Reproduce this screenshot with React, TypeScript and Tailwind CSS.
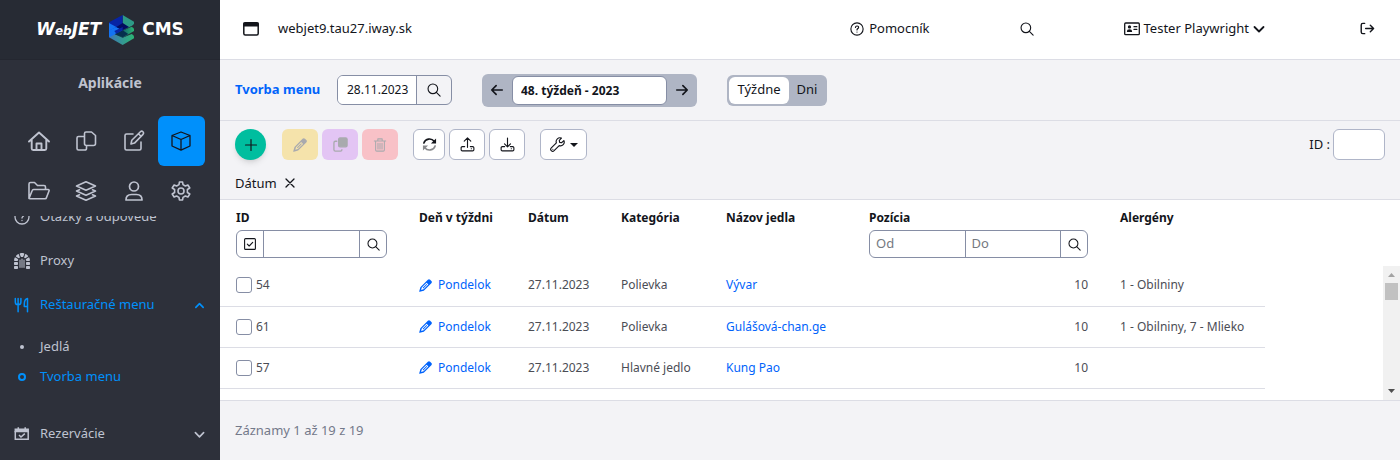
import React from "react";
import { FaDungeon } from "react-icons/fa6";

type IconProps = { className?: string };

function Svg({ className, box = 20, w = 1.5, children }: IconProps & { box?: number; w?: number; children: React.ReactNode }) {
  return (
    <svg viewBox={`0 0 ${box} ${box}`} className={className} fill="none" stroke="currentColor" strokeWidth={w} strokeLinecap="round" strokeLinejoin="round" aria-hidden="true">
      {children}
    </svg>
  );
}

const Search = ({ className }: IconProps) => (
  <Svg className={className} box={16} w={1.3}><circle cx="6.700" cy="6.700" r="5.500" /><path d="M10.700 10.700 15 15" /></Svg>
);
const Home = () => (
  <Svg className="size-6" box={24} w={1.9}><path d="M2 12.500 12 3.500l10 9M4.700 10.500V19.500a1.500 1.500 0 0 0 1.500 1.500h11.600a1.500 1.500 0 0 0 1.500-1.500V10.500M9.500 20.500v-6h5v6" /></Svg>
);
const Files = () => (
  <Svg className="size-6" box={24} w={1.6}><path d="M12 3h5.500L21.500 6.500V14.500a2 2 0 0 1-2 2H12.500a2 2 0 0 1-2-2V4.500A1.500 1.500 0 0 1 12 3zM10.500 7.500H4.500a1.500 1.500 0 0 0-1.500 1.500V19.500A1.500 1.500 0 0 0 4.500 21h6.500a1.500 1.500 0 0 0 1.500-1.500V16.500" /></Svg>
);
const Edit = () => (
  <Svg className="size-6" box={24} w={1.6}><path d="M11 5H4.500A1.500 1.500 0 0 0 3 6.500v13A1.500 1.500 0 0 0 4.500 21h13a1.500 1.500 0 0 0 1.500-1.500V13M9 15l.8-3.800 8.600-8.400a1.700 1.700 0 0 1 2.600 2.600l-8.500 8.700zM16.500 4.800l2.700 2.700" /></Svg>
);
const Box = () => (
  <Svg className="size-6" box={24} w={1.3}><path d="M12 3 21 6.500V17L12 21.200 3 17V6.500zM3 6.500l9 4 9-4M12 10.500V21" /></Svg>
);
const Folder = () => (
  <Svg className="size-6" box={24} w={1.6}><path d="M2 19.500V5A1.500 1.500 0 0 1 3.500 3.500h4l3 3h6.500A1.500 1.500 0 0 1 18.500 8v2M2.200 19l3-7.500A1.500 1.500 0 0 1 6.700 10.500H21a1 1 0 0 1 1 1.500l-2.500 6.500A1.500 1.500 0 0 1 18 19.700H2.700" /></Svg>
);
const Layers = () => (
  <Svg className="size-6" box={24} w={1.6}><path d="M12 2.800 21.500 7 12 11.200 2.500 7zM5.500 10.800 2.500 12l9.500 4.200 9.500-4.200-3-1.200M5.500 15.800 2.500 17l9.500 4.200 9.500-4.200-3-1.200" /></Svg>
);
const User = () => (
  <Svg className="size-6" box={24} w={1.7}><circle cx="12" cy="7.500" r="4.500" /><path d="M4 21c0-4 2.500-5.500 5.500-5.500h5c3 0 5.500 1.500 5.500 5.500z" /></Svg>
);
const Gear = () => (
  <Svg className="size-6" box={24} w={1.6}><circle cx="12" cy="12" r="3" /><path d="M10 5.600 10.400 3h3.200l.4 2.600 2.400 1.400 2.500-1 1.900 3-2.400 1.500v3l2.400 1.500-1.900 3-2.500-1-2.400 1.400-.4 2.600h-3.200L10 18.400 7.600 17l-2.500 1-1.900-3 2.400-1.500v-3L3.200 9l1.900-3 2.500 1z" /></Svg>
);
const Question = ({ className }: IconProps) => (
  <Svg className={className} box={16} w={1.3}><circle cx="8" cy="8" r="7" /><path d="M6.200 6.200c.2-2.400 4-2 3.600.2C9.600 7.500 8 7.600 8 9M8 11.400v.1" /></Svg>
);
const Fork = () => (
  <Svg className="size-4" box={16} w={1.500}><path d="M1.300 1.500v3.500a2.800 2.800 0 0 0 5.600 0V1.500M4.100 1.500v13.300M13.500 14.800V1.500c-2 .5-3.200 3-3.200 5.800v2.200h3.200" /></Svg>
);
const Chevron = ({ up, className = "size-[11px]" }: IconProps & { up?: boolean }) => (
  <Svg className={className} box={12} w={1.800}><path d={up ? "M2 8l4-4 4 4" : "M1.500 4 6 8.500 10.500 4"} /></Svg>
);
const CalendarCheck = () => (
  <svg viewBox="0 0 16 16" className="size-4" fill="none" stroke="currentColor" strokeWidth="1.500" aria-hidden="true">
    <path d="M1.300 3.300h12.900v2.200H1.300zM4.300 1.200v3M11.200 1.200v3" fill="currentColor" /><path d="M1.300 5v8.200h12.900V5M5 9l2 2 3.800-3.400" />
  </svg>
);
const Pencil = ({ className }: IconProps) => (
  <svg viewBox="0 0 16 16" className={className} aria-hidden="true">
    <path fill="currentColor" fillRule="evenodd" d="M10.900.9a2 2 0 0 1 2.800 0l1.500 1.500a2 2 0 0 1 0 2.800L5.900 14.400.900 15.800a.5.500 0 0 1-.6-.6L1.700 10.200zM9.300 4.600 3.400 10.500l-.8 3 3-.8 5.900-5.900zM4.500 10.900l4.800-4.800.8.800-4.800 4.800z" />
  </svg>
);
const Window = () => (
  <Svg className="size-4" box={16} w={1.500}><rect x=".8" y="1.800" width="14.400" height="12.200" rx="1.500" /><path d="M1 2.200h14v2.600H1z" fill="currentColor" /></Svg>
);
const IdCard = () => (
  <Svg className="size-4" box={16} w={1.300}><rect x=".7" y="2" width="14.600" height="11.700" rx="1" /><circle cx="5.500" cy="5.900" r="1" fill="currentColor" /><path d="M3.500 10.400c0-2 4-2 4 0z" fill="currentColor" /><path d="M10 5.700h2.800M10 8.400h2.800" /></Svg>
);
const Logout = () => (
  <Svg className="size-[15px]" box={16} w={1.500}><path d="M5 2.500H3A1.700 1.700 0 0 0 1.300 4.200v7.600A1.700 1.700 0 0 0 3 13.500h2M6 8h8.500M11 4.500 14.500 8 11 11.500" /></Svg>
);
const Arrow = ({ right }: { right?: boolean }) => (
  <Svg className="size-[14px]" box={16} w={1.900}><path d={right ? "M2 8h12M9 3l5 5-5 5" : "M14 8H2M7 3 2 8l5 5"} /></Svg>
);
const Refresh = () => (
  <svg viewBox="0 0 16 16" className="size-[15px]" fill="none" stroke="currentColor" strokeWidth="1.700" strokeLinecap="round" aria-hidden="true">
    <path d="M2 6.500C3.500 1.500 10 .800 13 4.500" /><path d="M15 1.500v5.500h-5.500z" fill="currentColor" stroke="none" />
    <g opacity=".5"><path d="M14 9.500C12.500 14.500 6 15.200 3 11.500" /><path d="M1 14.500v-5.500h5.500z" fill="currentColor" stroke="none" /></g>
  </svg>
);
const Transfer = ({ down }: { down?: boolean }) => (
  <Svg className="size-[15px]" box={16} w={1.200}><path d={down ? "M8 1v9.500M4.800 7.300 8 10.500l3.200-3.200" : "M8 11V1M4.500 4.500 8 1l3.500 3.500"} /><path d="M5 10.200H2.500a1.300 1.300 0 0 0-1.300 1.300v2a1.300 1.300 0 0 0 1.300 1.300h11a1.300 1.300 0 0 0 1.300-1.300v-2a1.300 1.300 0 0 0-1.300-1.300H11M12 12.500h.2" /></Svg>
);
const Wrench = () => (
  <Svg className="size-[15px]" box={16} w={1.200}><path d="M12.200 1.200a4 4 0 0 0-5.400 5L1.400 11.600a2.100 2.100 0 0 0 3 3l5.400-5.400a4 4 0 0 0 5-5.400l-2.500 2.300-2-.4-.4-2zM3 13h.1" /></Svg>
);

function LogoMark() {
  return (
    <svg viewBox="0 0 75 90" className="h-[30px] w-[25px]" aria-hidden="true">
      <defs>
        <linearGradient id="base"><stop offset="0" stopColor="#3f74b8" /><stop offset="1" stopColor="#2bb673" /></linearGradient>
        <linearGradient id="lobe"><stop offset="0.400" stopColor="#12676b" /><stop offset="1" stopColor="#2bb673" /></linearGradient>
      </defs>
      <path d="M0 50 41 68 68 57q7 3 7 8v5L41 90 0 67z" fill="url(#base)" />
      <path d="M20 56 68 35q7 3 7 8v5L41 68z" fill="url(#lobe)" />
      <path d="M41 0 75 20v5q0 4-6 7L41 46z" fill="#2d9a86" />
      <path d="M0 24 41 46 16 59 0 67z" fill="#1473f2" />
      <path d="M0 22 41 0v45L22 36 0 46z" fill="#0724a4" />
      <path d="M0 24 22 36 0 47z" fill="#1473f2" />
      <path d="M22 36 41 24 60 36 41 46z" fill="#030b5e" />
      <path d="M18 57 41 46 58 57 41 67z" fill="#06304e" />
      <path d="M16 48 41 36 41 46 22 56z" fill="#0724a4" />
    </svg>
  );
}

const tiles = [
  { label: "Domov", icon: <Home /> },
  { label: "Stránky", icon: <Files /> },
  { label: "Formuláre", icon: <Edit /> },
  { label: "Aplikácie", icon: <Box />, active: true },
  { label: "Súbory", icon: <Folder /> },
  { label: "Šablóny", icon: <Layers /> },
  { label: "Používatelia", icon: <User /> },
  { label: "Nastavenia", icon: <Gear /> },
];

const rows = [
  { id: 54, category: "Polievka", name: "Vývar", allergens: "1 - Obilniny" },
  { id: 61, category: "Polievka", name: "Gulášová-chan.ge", allergens: "1 - Obilniny, 7 - Mlieko" },
  { id: 57, category: "Hlavné jedlo", name: "Kung Pao", allergens: "" },
];

function Sidebar() {
  return (
    <aside className="flex w-[220px] shrink-0 flex-col bg-[#2d303a] text-[#bfc3d0]">
      <a href="#" aria-label="WebJET CMS" className="flex h-[60px] items-center justify-center gap-2 border-b border-[#242730] bg-[#272b34] font-['DejaVu_Sans',sans-serif] text-[17px] font-bold text-white">
        <span className="italic">W<span className="text-xs">eb</span>JET</span>
        <LogoMark />
        <span>CMS</span>
      </a>
      <h2 className="flex h-[46px] items-center justify-center text-sm font-bold">Aplikácie</h2>
      <nav aria-label="Moduly" className="grid grid-cols-4 px-[15px] pt-[10px]">
        {tiles.map((t) => (
          <a key={t.label} href="#" aria-label={t.label} className={t.active ? "flex h-[50px] items-center justify-center rounded-md bg-[#0090fb] text-[#13151b]" : "flex h-[50px] items-center justify-center"}>
            {t.icon}
          </a>
        ))}
      </nav>
      <nav aria-label="Aplikácie" className="flex flex-col overflow-hidden text-[13px]">
        <a href="#" className="-mt-[21px] flex h-11 items-center gap-[10px] px-[14px] [clip-path:inset(20px_0_0_0)]"><Question className="size-4" />Otázky a odpovede</a>
        <a href="#" className="flex h-11 items-center gap-[10px] px-[14px]"><FaDungeon className="size-4" />Proxy</a>
        <a href="#" className="flex h-11 items-center gap-[10px] pr-[15px] pl-[14px] text-[#0090fb]"><Fork /><span className="flex-1">Reštauračné menu</span><Chevron up /></a>
        <a href="#" className="mt-[5px] flex h-[30px] items-center gap-[10px] px-[14px]"><span className="flex w-4 justify-center"><span className="size-1 rounded-full bg-current" /></span>Jedlá</a>
        <a href="#" className="flex h-[30px] items-center gap-[10px] px-[14px] text-[#0090fb]"><span className="flex w-4 justify-center"><span className="size-2 rounded-full border-2 border-current" /></span>Tvorba menu</a>
        <a href="#" className="mt-5 flex h-11 items-center gap-[10px] pr-[15px] pl-[14px]"><CalendarCheck /><span className="flex-1">Rezervácie</span><Chevron /></a>
      </nav>
    </aside>
  );
}

function TopBar() {
  return (
    <header className="flex h-[60px] items-center border-b border-[#dcdde5] bg-white pr-[25px] pb-[2px] pl-[23px] text-[13px]">
      <a href="#" className="flex items-center gap-[19px]"><Window />webjet9.tau27.iway.sk</a>
      <a href="#" className="ml-auto flex items-center gap-[5px]"><Question className="size-[14px]" />Pomocník</a>
      <button aria-label="Hľadať" className="ml-[90px]"><Search className="size-[14px]" /></button>
      <button className="ml-[90px] flex items-center gap-1"><IdCard />Tester Playwright<Chevron className="size-3" /></button>
      <button aria-label="Odhlásiť" className="ml-[95px]"><Logout /></button>
    </header>
  );
}

function FilterBar() {
  return (
    <div className="flex h-[61px] items-center border-b border-[#dcdde5] px-[15px] text-[13px]">
      <h1 className="w-[102px] font-bold text-[#0063fb]">Tvorba menu</h1>
      <div className="flex h-[30px] w-[115px] overflow-hidden rounded-md border border-[#868ea5]">
        <input aria-label="Dátum" defaultValue="28.11.2023" className="w-[79px] border-r border-[#868ea5] bg-white pl-[9px] text-xs" />
        <button aria-label="Hľadať dátum" className="flex flex-1 items-center justify-center"><Search className="size-[14px]" /></button>
      </div>
      <div className="ml-[30px] flex h-[33px] items-center rounded-md bg-[#afb5c4]">
        <button aria-label="Predchádzajúci týždeň" className="flex w-[30px] justify-center"><Arrow /></button>
        <input aria-label="Týždeň" defaultValue="48. týždeň - 2023" className="h-[29px] w-[155px] rounded-md border border-[#868ea5] bg-white px-2 text-xs font-bold" />
        <button aria-label="Nasledujúci týždeň" className="flex w-[30px] justify-center"><Arrow right /></button>
      </div>
      <div className="ml-[30px] flex h-[31px] items-center rounded-md bg-[#afb5c4] p-[2px]">
        <button className="h-[27px] w-[60px] rounded-md bg-white">Týždne</button>
        <button className="w-9 text-center">Dni</button>
      </div>
    </div>
  );
}

function Toolbar() {
  const plain = "flex h-[31px] w-9 items-center justify-center rounded-md";
  const outlined = "flex h-[31px] items-center justify-center rounded-md border border-[#afb5c8] bg-white";
  return (
    <div className="flex h-[79px] flex-col border-b border-[#dcdde5] px-[15px] pt-2 text-[13px]">
      <div className="flex items-center">
        <button aria-label="Pridať" className="flex size-[31px] items-center justify-center rounded-full bg-[#00be9f] shadow-md"><Svg className="size-[14px]" box={14} w={1.200}><path d="M7 1.500v11M1.500 7h11" /></Svg></button>
        <div className="ml-4 flex gap-1 text-[#a9aaae]">
          <button disabled aria-label="Upraviť" className={`${plain} bg-[#f5e3ab]`}><Pencil className="size-[14px]" /></button>
          <button disabled aria-label="Duplikovať" className={`${plain} bg-[#e3c5f4]`}><Svg className="size-[15px]" box={16} w={1.400}><rect x="6" y="1" width="9" height="9.500" rx="1.500" fill="currentColor" /><path d="M4 4.500H2.500A1.500 1.500 0 0 0 1 6v7.500A1.500 1.500 0 0 0 2.500 15H8A1.500 1.500 0 0 0 9.500 13.500" /></Svg></button>
          <button disabled aria-label="Vymazať" className={`${plain} bg-[#f8c1c7]`}><Svg className="size-[14px]" box={16} w={1.200}><path d="M1.500 3.500h13M5.500 3.500v-2.500h5v2.500M3 3.500v10.200A1.300 1.300 0 0 0 4.300 15h7.400a1.300 1.300 0 0 0 1.300-1.300v-10.200M5.700 6v6.500M8 6v6.500M10.300 6v6.500" /></Svg></button>
        </div>
        <div className="ml-[15px] flex gap-1">
          <button aria-label="Obnoviť" className={`${outlined} w-8`}><Refresh /></button>
          <button aria-label="Exportovať" className={`${outlined} w-9`}><Transfer /></button>
          <button aria-label="Importovať" className={`${outlined} w-9`}><Transfer down /></button>
        </div>
        <button aria-label="Nastavenia tabuľky" className={`${outlined} ml-[15px] w-[47px] gap-[5px]`}><Wrench /><svg viewBox="0 0 8 4" className="h-1 w-2" aria-hidden="true"><path d="M0 0h8L4 4z" fill="currentColor" /></svg></button>
        <label className="ml-auto flex items-center gap-[3px]">ID :<input className="h-[31px] w-[52px] rounded-md border border-[#afb5c8] bg-white px-2" /></label>
      </div>
      <button className="mt-[13px] flex items-center gap-2 self-start leading-5">Dátum<Svg className="size-[10px]" box={10} w={1.300}><path d="m1 1 8 8M9 1l-8 8" /></Svg></button>
    </div>
  );
}

function MenuTable() {
  const group = "flex h-7 overflow-hidden rounded-md border border-[#868ea5] font-normal";
  return (
    <div className="flex min-h-[200px] flex-1 items-stretch justify-between overflow-hidden bg-white">
      <table className="w-[1045px] table-fixed self-start text-left text-xs text-[#4b4d55]">
        <colgroup>
          <col className="w-[183px]" /><col className="w-[109px]" /><col className="w-[93px]" /><col className="w-[105px]" /><col className="w-[143px]" /><col className="w-[251px]" /><col className="w-[161px]" />
        </colgroup>
        <thead className="align-top text-[#13151b]">
          <tr className="h-[65px]">
            <th className="px-4 pt-2">
              <div className="mb-[2px] leading-5">ID</div>
              <div className={group}>
                <label className="flex w-[27px] items-center justify-center border-r border-[#868ea5]">
                  <input type="checkbox" aria-label="Vybrať všetko" defaultChecked className="peer sr-only" />
                  <Svg className="size-3" box={12} w={1.100}><rect x=".6" y=".6" width="10.800" height="10.800" rx="1" /><path d="m3.300 6.200 1.900 1.800 3.500-3.600" /></Svg>
                </label>
                <input aria-label="Filter ID" className="w-0 flex-1 px-2" />
                <button aria-label="Filtrovať ID" className="flex w-[27px] items-center justify-center border-l border-[#868ea5]"><Search className="size-[13px]" /></button>
              </div>
            </th>
            <th className="px-4 pt-2 leading-5">Deň v týždni</th>
            <th className="px-4 pt-2 leading-5">Dátum</th>
            <th className="px-4 pt-2 leading-5">Kategória</th>
            <th className="px-4 pt-2 leading-5">Názov jedla</th>
            <th className="px-4 pt-2">
              <div className="mb-[2px] leading-5">Pozícia</div>
              <div className={`${group} text-[13px]`}>
                <input aria-label="Pozícia od" placeholder="Od" className="w-0 flex-1 px-[6px] placeholder:text-[#75797f]" />
                <input aria-label="Pozícia do" placeholder="Do" className="w-0 flex-1 border-l border-[#868ea5] px-[6px] placeholder:text-[#75797f]" />
                <button aria-label="Filtrovať pozíciu" className="flex w-[27px] items-center justify-center border-l border-[#868ea5]"><Search className="size-[13px]" /></button>
              </div>
            </th>
            <th className="px-4 pt-2 leading-5">Alergény</th>
          </tr>
        </thead>
        <tbody>
          {rows.map((r) => (
            <tr key={r.id} className="h-[41px] border-b border-[#dcdde5] whitespace-nowrap">
              <td className="px-4">
                <label className="flex items-center gap-1"><input type="checkbox" className="size-4 appearance-none rounded-[3px] border border-[#868ea5] bg-white" />{r.id}</label>
              </td>
              <td className="px-4"><a href="#" className="flex items-center gap-[6px] text-[#0063fb]"><Pencil className="size-[13px]" />Pondelok</a></td>
              <td className="px-4">27.11.2023</td>
              <td className="px-4">{r.category}</td>
              <td className="px-4"><a href="#" className="text-[#0063fb]">{r.name}</a></td>
              <td className="px-4 text-right">10</td>
              <td className="px-4">{r.allergens}</td>
            </tr>
          ))}
        </tbody>
      </table>
      <div className="mt-[66px] flex w-[17px] flex-col items-center bg-[#f1f1f1]" aria-hidden="true">
        <svg viewBox="0 0 17 17" className="size-[17px]"><path d="M5 11h7L8.500 7z" fill="#a3a3a3" /></svg>
        <div className="h-[17px] w-[13px] bg-[#c1c1c1]" />
        <svg viewBox="0 0 17 17" className="mt-auto size-[17px]"><path d="M5 6h7l-3.500 4z" fill="#505050" /></svg>
      </div>
    </div>
  );
}

export default function App() {
  return (
    <div className="flex min-h-screen bg-[#f3f3f6] font-['Noto_Sans',sans-serif] text-[#13151b]">
      <Sidebar />
      <main className="flex min-w-0 flex-1 flex-col">
        <TopBar />
        <FilterBar />
        <Toolbar />
        <MenuTable />
        <footer className="flex h-[60px] items-center border-t border-[#dcdde5] px-[15px] text-[13px] text-[#73798a]">Záznamy 1 až 19 z 19</footer>
      </main>
    </div>
  );
}
